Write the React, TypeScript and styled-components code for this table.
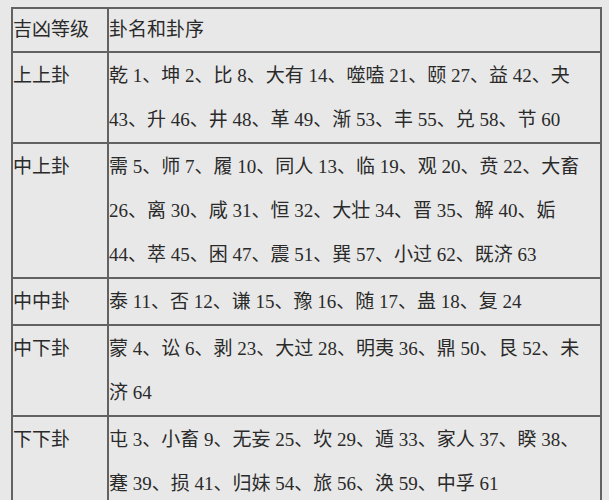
import React from "react";
import styled, { createGlobalStyle } from "styled-components";

const GlobalStyle = createGlobalStyle`
  html, body {
    margin: 0;
    padding: 0;
    background: #e8e8e8;
  }
`;

interface Grade {
  level: string;
  lines: string[];
}

const grades: Grade[] = [
  {
    level: "上上卦",
    lines: [
      "乾 1、坤 2、比 8、大有 14、噬嗑 21、颐 27、益 42、夬",
      "43、升 46、井 48、革 49、渐 53、丰 55、兑 58、节 60",
    ],
  },
  {
    level: "中上卦",
    lines: [
      "需 5、师 7、履 10、同人 13、临 19、观 20、贲 22、大畜",
      "26、离 30、咸 31、恒 32、大壮 34、晋 35、解 40、姤",
      "44、萃 45、困 47、震 51、巽 57、小过 62、既济 63",
    ],
  },
  {
    level: "中中卦",
    lines: ["泰 11、否 12、谦 15、豫 16、随 17、蛊 18、复 24"],
  },
  {
    level: "中下卦",
    lines: ["蒙 4、讼 6、剥 23、大过 28、明夷 36、鼎 50、艮 52、未", "济 64"],
  },
  {
    level: "下下卦",
    lines: [
      "屯 3、小畜 9、无妄 25、坎 29、遁 33、家人 37、睽 38、",
      "蹇 39、损 41、归妹 54、旅 56、涣 59、中孚 61",
    ],
  },
];

export default function App() {
  return (
    <>
      <GlobalStyle />
      <Page>
        <Table>
          <colgroup>
            <col style={{ width: 96 }} />
            <col />
          </colgroup>
          <thead>
            <tr>
              <HeadCell>吉凶等级</HeadCell>
              <HeadCell>卦名和卦序</HeadCell>
            </tr>
          </thead>
          <tbody>
            {grades.map((g) => (
              <tr key={g.level}>
                <Cell>{g.level}</Cell>
                <Cell>
                  {g.lines.map((line, i) => (
                    <Line key={i}>{line}</Line>
                  ))}
                </Cell>
              </tr>
            ))}
          </tbody>
        </Table>
      </Page>
    </>
  );
}

const Page = styled.div`
  padding: 7px 0 0 11px;
  font-family: "Liberation Serif", "Noto Sans CJK SC", serif;
  font-size: 19px;
  color: #2a2a2a;
`;

const Table = styled.table`
  width: 591px;
  table-layout: fixed;
  border-collapse: separate;
  border-spacing: 0;
  border-top: 2px solid #626262;
  border-left: 2px solid #626262;
`;

const Cell = styled.td`
  vertical-align: top;
  text-align: left;
  padding: 1px 0 0 0;
  line-height: 44px;
  border-right: 2px solid #626262;
  border-bottom: 2px solid #626262;
  white-space: nowrap;
  overflow: hidden;
`;

const HeadCell = styled(Cell).attrs({ as: "th" })`
  font-weight: normal;
  padding-top: 0;
  line-height: 42px;
`;

const Line = styled.div`
  height: 44px;
`;
